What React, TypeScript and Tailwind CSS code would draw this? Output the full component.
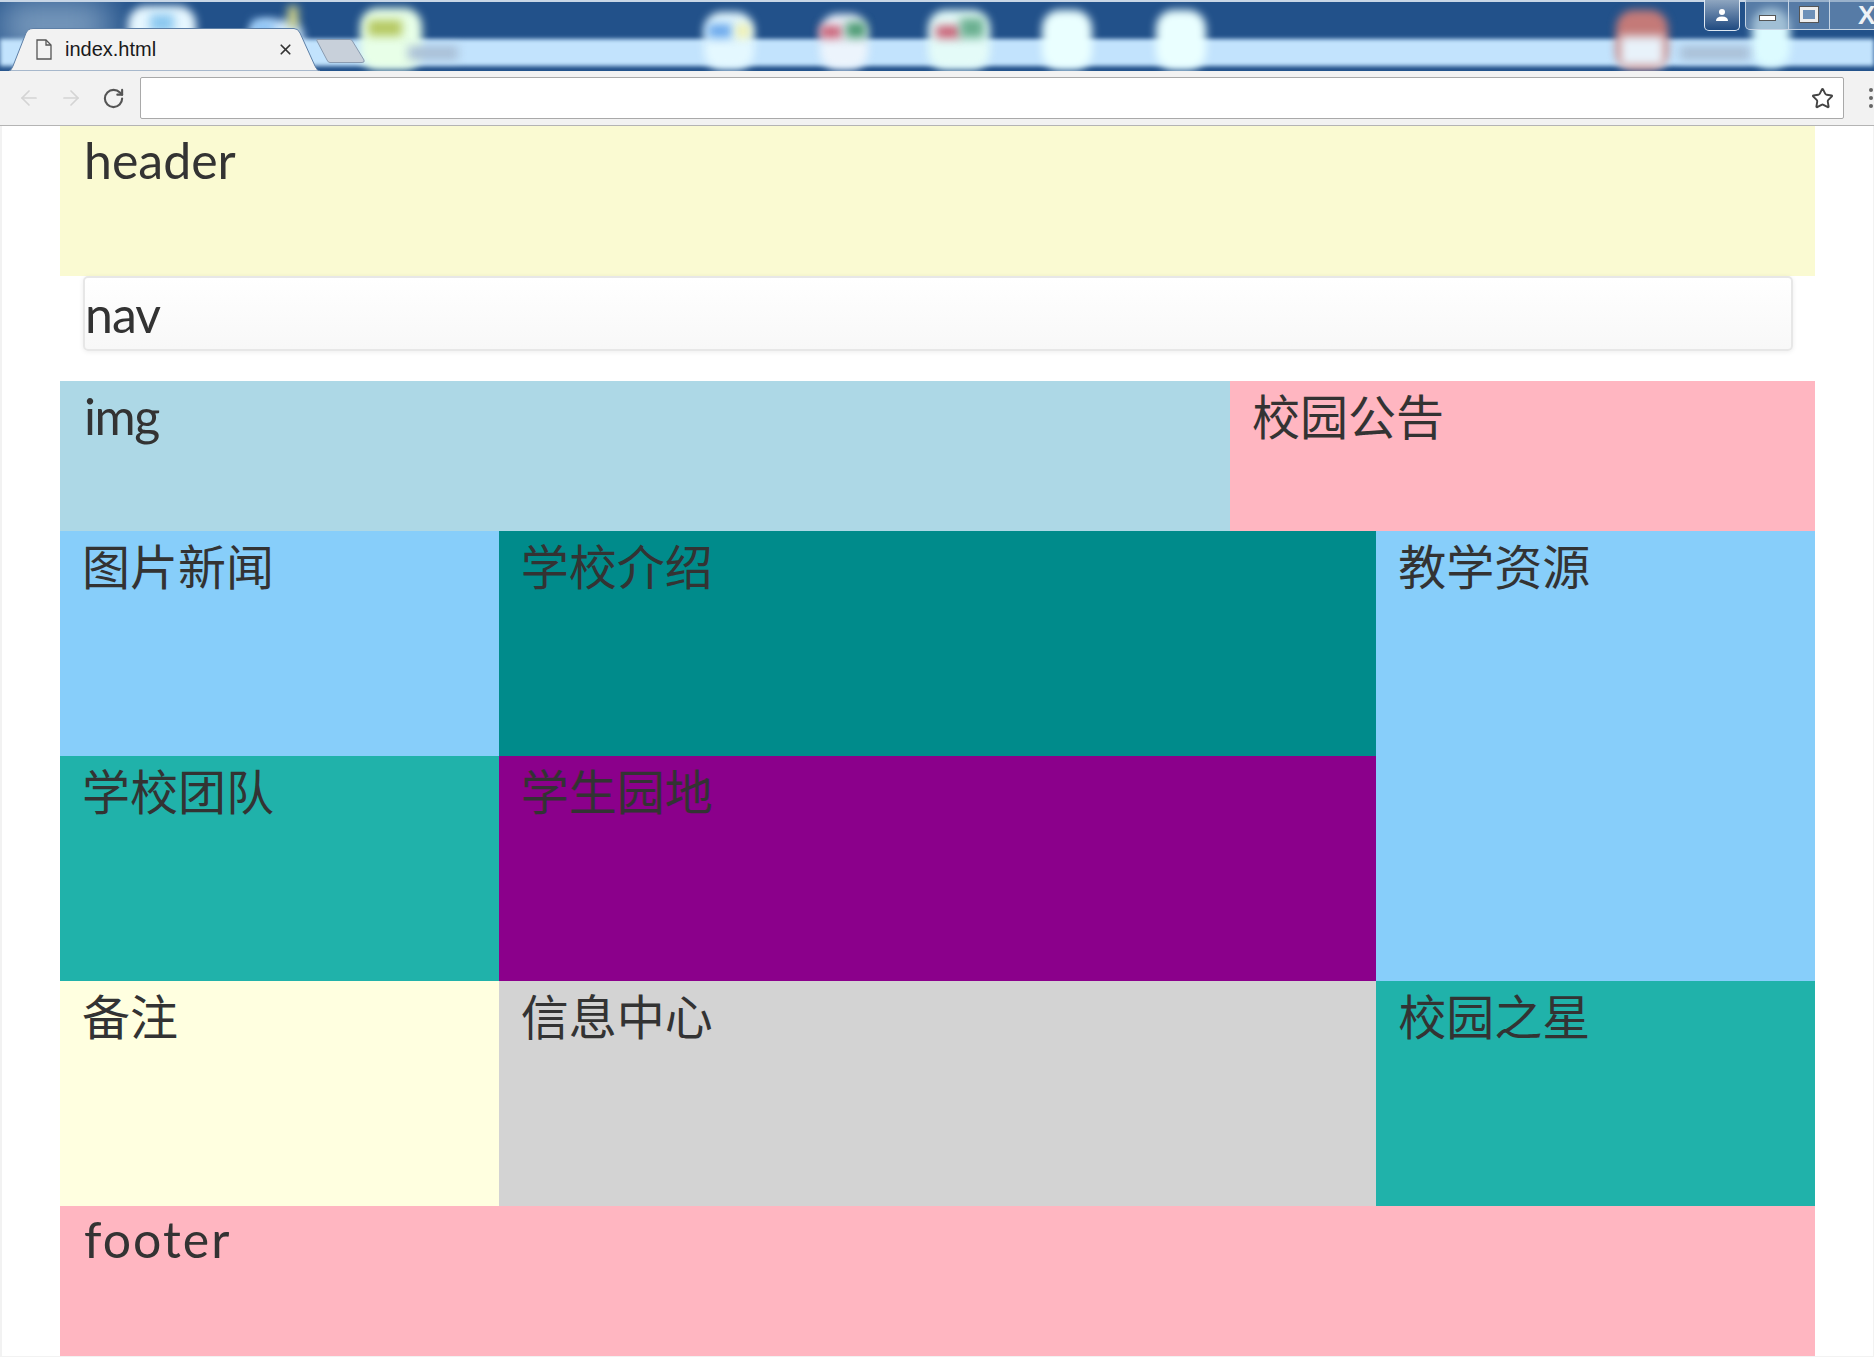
import React from "react";
import { ArrowLeft, ArrowRight, RotateCw, Star, X } from "lucide-react";

const latin = "font-['Lato','Noto_Sans',sans-serif] text-[50px] leading-[60px]";
const cjk = "font-['Noto_Sans_CJK_SC',sans-serif] text-[48px] leading-[64px]";

// desktop icons showing through the aero title bar
const blobs: { pos: string; cls: string }[] = [
  { pos: "left-[128px] top-[6px] w-[68px] h-[62px]", cls: "bg-[#e6f7ff]" },
  { pos: "left-[248px] top-[20px] w-[56px] h-[46px]", cls: "bg-[#cfe9ff]" },
  { pos: "left-[360px] top-[8px] w-[62px] h-[62px]", cls: "bg-[#e8ffe8]" },
  { pos: "left-[704px] top-[12px] w-[50px] h-[58px]", cls: "bg-[#e4f8ff]" },
  { pos: "left-[820px] top-[14px] w-[48px] h-[56px]", cls: "bg-[#ecf4fc]" },
  { pos: "left-[928px] top-[10px] w-[62px] h-[60px]", cls: "bg-[#e4fbf8]" },
  { pos: "left-[1042px] top-[10px] w-[50px] h-[60px]", cls: "bg-[#eaffff]" },
  { pos: "left-[1156px] top-[10px] w-[50px] h-[60px]", cls: "bg-[#eaffff]" },
  { pos: "left-[1616px] top-[10px] w-[52px] h-[60px]", cls: "bg-[#c47a78]" },
  { pos: "left-[1752px] top-[8px] w-[38px] h-[60px]", cls: "bg-[#dcfbff]" },
];

// coloured parts of those icons
const spots: { pos: string; cls: string }[] = [
  { pos: "left-[150px] top-[14px] w-[24px] h-[18px]", cls: "bg-[#8cc8f0]" },
  { pos: "left-[252px] top-[20px] w-[22px] h-[16px]", cls: "bg-[#8fc4f5]" },
  { pos: "left-[288px] top-[6px] w-[10px] h-[22px]", cls: "bg-[#d8d88a]" },
  { pos: "left-[368px] top-[20px] w-[34px] h-[16px]", cls: "bg-[#b5c860]" },
  { pos: "left-[708px] top-[24px] w-[24px] h-[14px]", cls: "bg-[#6aa8ec]" },
  { pos: "left-[736px] top-[24px] w-[14px] h-[14px]", cls: "bg-[#f0f0b0]" },
  { pos: "left-[820px] top-[26px] w-[22px] h-[12px]", cls: "bg-[#c85a70]" },
  { pos: "left-[846px] top-[22px] w-[20px] h-[16px]", cls: "bg-[#4c9a72]" },
  { pos: "left-[936px] top-[26px] w-[24px] h-[12px]", cls: "bg-[#c85a70]" },
  { pos: "left-[960px] top-[18px] w-[24px] h-[20px]", cls: "bg-[#6aaf90]" },
  { pos: "left-[1620px] top-[36px] w-[44px] h-[30px]", cls: "bg-[#e8f2fa]" },
  { pos: "left-[1680px] top-[46px] w-[70px] h-[14px]", cls: "bg-[#a9bfd6]" },
  { pos: "left-[408px] top-[46px] w-[50px] h-[14px]", cls: "bg-[#a9bfd6]" },
];

const TitleBar = () => (
  <div className="relative h-[71px] shrink-0 overflow-hidden bg-[#22518a]">
    <div className="absolute left-0 top-0 h-[50px] w-[110px] bg-[#7f9fc0] blur-[18px]" />
    <div className="absolute left-0 right-0 top-[39px] h-[27px] bg-[#c2e3fd] blur-[2px]" />
    {blobs.map((b) => (
      <div key={b.pos} className={`absolute rounded-[18px] blur-[4px] ${b.pos} ${b.cls}`} />
    ))}
    {spots.map((s) => (
      <div key={s.pos} className={`absolute blur-[5px] ${s.pos} ${s.cls}`} />
    ))}
    <div className="absolute left-0 right-0 top-0 h-[2px] bg-[#c8d6e6]" />

    {/* new tab button */}
    <svg className="absolute left-[316px] top-[38px]" width="50" height="26" viewBox="0 0 50 26">
      <path d="M1 1.5H34Q36 1.5 37 4L48 22Q49 24.5 46 24.5H14Q12 24.5 11 22L1 3Q.5 1.5 1 1.5Z" fill="#c8d0da" stroke="#8a9bb0" />
    </svg>

    {/* tab */}
    <svg className="absolute left-[8px] top-[28px]" width="312" height="43" viewBox="0 0 312 43">
      <path d="M1 43Q3 43 5 38L18 5Q20 .5 25 .5H286Q290 .5 292 5L307 38Q309 43 312 43Z" fill="#f2f2f2" stroke="#5d7fa6" />
    </svg>
    <svg className="absolute left-[36px] top-[39px]" width="16" height="21" viewBox="0 0 16 21" fill="none" stroke="#555" strokeWidth="1.3">
      <path d="M1 1H10L15 6V20H1Z" />
      <path d="M10 1V6H15" />
    </svg>
    <span className="absolute left-[65px] top-[37px] font-['Liberation_Sans',sans-serif] text-[20px] leading-[24px] text-[#1a1a1a]">index.html</span>
    <X className="absolute left-[277px] top-[41px] text-[#333]" size={17} strokeWidth={2.4} />

    {/* window controls */}
    <div className="absolute left-[1704px] top-0 flex h-[31px] w-[36px] items-start justify-center rounded-b-[5px] border-x border-b border-[#dfe8f2] bg-gradient-to-b from-[#8fa6c0] to-[#1f4a80]">
      <svg className="mt-[8px]" width="14" height="14" viewBox="0 0 14 14" fill="#fff">
        <circle cx="7" cy="4" r="3" />
        <path d="M1 13Q1 8.5 7 8.5T13 13Z" />
      </svg>
    </div>
    <div className="absolute left-[1745px] top-0 flex h-[30px] w-[140px] rounded-b-[5px] border border-t-0 border-[#c4d3e3] bg-[#7a98b9]/60">
      <div className="flex w-[43px] items-end justify-center border-r border-[#c4d3e3] pb-[8px]">
        <div className="h-[6px] w-[17px] border border-[#555] bg-white" />
      </div>
      <div className="flex w-[41px] items-center justify-center border-r border-[#c4d3e3]">
        <div className="h-[15px] w-[18px] border-[3px] border-[#eee] bg-[#6d90b8] outline outline-[#555]" />
      </div>
      <div className="flex-1 pl-[28px] pt-[4px] font-['Liberation_Sans',sans-serif] text-[26px] font-bold leading-[22px] text-[#eef2f6]">X</div>
    </div>
  </div>
);

const Toolbar = () => (
  <div className="relative flex h-[55px] shrink-0 items-center border-b border-[#b4b4b4] bg-[#f2f2f2]">
    <div className="flex w-[140px] shrink-0 items-center pl-[17px]">
      <ArrowLeft className="text-[#d4d4d4]" size={24} strokeWidth={1.7} />
      <ArrowRight className="ml-[18px] text-[#d4d4d4]" size={24} strokeWidth={1.7} />
      <RotateCw className="ml-[19px] text-[#555]" size={23} strokeWidth={2.2} />
    </div>
    <div className="flex h-[42px] w-[1704px] shrink-0 items-center justify-end rounded-[2px] border border-[#a9a9a9] bg-white pr-[9px]">
      <Star className="text-[#444]" size={23} strokeWidth={2} />
    </div>
    <div className="ml-[25px] flex flex-col gap-[4px]">
      <div className="h-[4px] w-[4px] rounded-full bg-[#666]" />
      <div className="h-[4px] w-[4px] rounded-full bg-[#666]" />
      <div className="h-[4px] w-[4px] rounded-full bg-[#666]" />
    </div>
  </div>
);

const CjkCell = ({ label, bg, extra = "" }: { label: string; bg: string; extra?: string }) => (
  <div className={`h-full pl-[22px] pt-[1px] text-[#333] ${cjk} ${bg} ${extra}`}>{label}</div>
);

const LatinCell = ({ label, bg, extra = "" }: { label: string; bg: string; extra?: string }) => (
  <div className={`h-full pl-[24px] text-[#333] ${latin} ${bg} ${extra}`}>{label}</div>
);

const App: React.FC = () => {
  return (
    <div className="flex h-screen w-full flex-col overflow-hidden bg-[#f2f2f2]">
      <TitleBar />
      <Toolbar />
      <main className="ml-[2px] mr-[1px] h-[1230px] shrink-0 bg-white px-[58px]">
        <div className="h-[150px]">
          <LatinCell label="header" bg="bg-[#fafad2] pt-[4px]" />
        </div>
        <div className="ml-[23px] mr-[22px] mb-[30px] h-[75px] rounded-[5px] border-2 border-[#e7e7e7] bg-gradient-to-b from-white to-[#f8f8f8] shadow-[0_1px_5px_rgba(0,0,0,0.075)]">
          <div className={`pt-[6px] tracking-[-1px] text-[#333] ${latin}`}>nav</div>
        </div>
        <div className="grid h-[150px] grid-cols-3">
          <LatinCell label="img" bg="bg-[#add8e6] pt-[5px]" extra="col-span-2 tracking-[-1.5px]" />
          <CjkCell label="校园公告" bg="bg-[#ffb6c1]" />
        </div>
        <div className="grid h-[675px] grid-cols-4 grid-rows-3">
          <CjkCell label="图片新闻" bg="bg-[#87cefa]" />
          <CjkCell label="学校介绍" bg="bg-[#008b8b]" extra="col-span-2" />
          <CjkCell label="教学资源" bg="bg-[#87cefa]" extra="row-span-2" />
          <CjkCell label="学校团队" bg="bg-[#20b2aa]" />
          <CjkCell label="学生园地" bg="bg-[#8b008b]" extra="col-span-2" />
          <CjkCell label="备注" bg="bg-[#ffffe0]" />
          <CjkCell label="信息中心" bg="bg-[#d3d3d3]" extra="col-span-2" />
          <CjkCell label="校园之星" bg="bg-[#20b2aa]" />
        </div>
        <div className="h-[150px]">
          <LatinCell label="footer" bg="bg-[#ffb6c1] pt-[3px]" extra="tracking-[2px]" />
        </div>
      </main>
    </div>
  );
};

export default App;
